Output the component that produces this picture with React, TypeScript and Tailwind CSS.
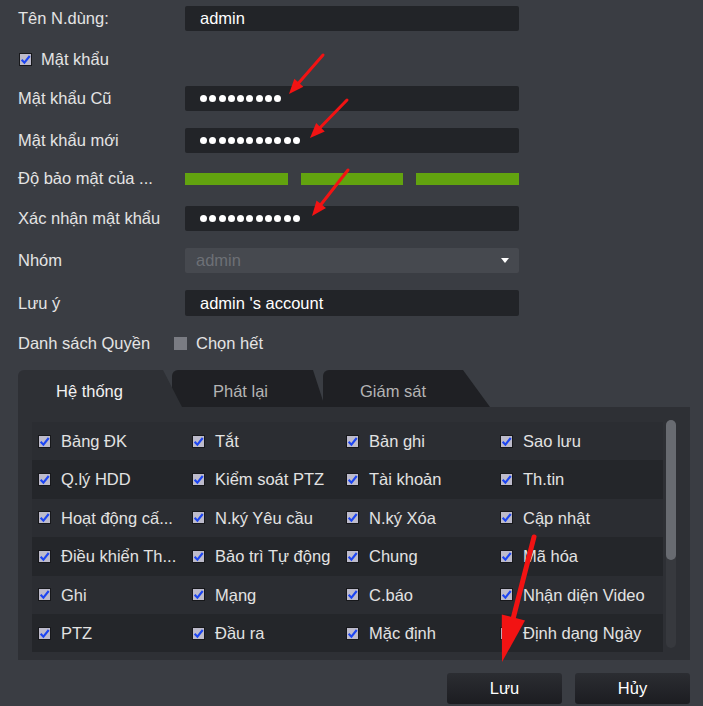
const Check = ({ on = true }: { on?: boolean }) => (
  <span className="w-[13px] h-[13px] shrink-0 bg-[#bdbbcb] border border-[#17181b] flex items-center justify-center">
    {on && (
      <svg viewBox="0 0 12 12" className="w-[11px] h-[11px]">
        <path d="M1.8 6.2 L4.8 9.4 L10.6 2.2" stroke="#1c45f2" strokeWidth="2.3" fill="none" />
      </svg>
    )}
  </span>
);

const Dots = ({ n }: { n: number }) => (
  <div className="flex gap-[2.3px]">
    {Array.from({ length: n }).map((_, i) => (
      <span key={i} className="w-[7px] h-[7px] rounded-full bg-white" />
    ))}
  </div>
);

const Row = ({ label, cls, children }: { label: string; cls: string; children: React.ReactNode }) => (
  <div className={"flex items-center h-[25px] " + cls}>
    <div className="w-[167px] text-[#e4e4e4]">{label}</div>
    {children}
  </div>
);

const Field = ({ children }: { children: React.ReactNode }) => (
  <div className="w-[334px] h-full bg-[#222428] rounded-[2px] pl-[15px] flex items-center text-white">
    {children}
  </div>
);

const perms = [
  ["Bảng ĐK", "Tắt", "Bản ghi", "Sao lưu"],
  ["Q.lý HDD", "Kiểm soát PTZ", "Tài khoản", "Th.tin"],
  ["Hoạt động cấ...", "N.ký Yêu cầu", "N.ký Xóa", "Cập nhật"],
  ["Điều khiển Th...", "Bảo trì Tự động", "Chung", "Mã hóa"],
  ["Ghi", "Mạng", "C.báo", "Nhận diện Video"],
  ["PTZ", "Đầu ra", "Mặc định", "Định dạng Ngày"],
];

function Arrow({ x1, y1, x2, y2, w, hl, hw }: { x1: number; y1: number; x2: number; y2: number; w: number; hl: number; hw: number }) {
  const len = Math.hypot(x2 - x1, y2 - y1);
  const ux = (x2 - x1) / len;
  const uy = (y2 - y1) / len;
  const bx = x2 - ux * hl;
  const by = y2 - uy * hl;
  const px = -uy * (hw / 2);
  const py = ux * (hw / 2);
  return (
    <g fill="#f21313" stroke="#f21313">
      <line x1={x1} y1={y1} x2={bx + ux * 2} y2={by + uy * 2} strokeWidth={w} strokeLinecap="round" />
      <polygon points={`${x2},${y2} ${bx + px},${by + py} ${bx - px},${by - py}`} stroke="none" />
    </g>
  );
}

export default function App() {
  return (
    <div className="relative w-[703px] h-[706px] overflow-hidden bg-[#3a3d43] font-['Liberation_Sans',Arial,sans-serif] text-[16.5px] leading-none">
      <div className="pt-[6px] pl-[18px]">
        <Row label="Tên N.dùng:" cls="">
          <Field>admin</Field>
        </Row>
        <div className="mt-[16px] h-[25px] flex items-center gap-[9px] pl-[1px] text-[#e4e4e4]">
          <Check />
          <span>Mật khẩu</span>
        </div>
        <Row label="Mật khẩu Cũ" cls="mt-[14px]">
          <Field>
            <Dots n={9} />
          </Field>
        </Row>
        <Row label="Mật khẩu mới" cls="mt-[17px]">
          <Field>
            <Dots n={11} />
          </Field>
        </Row>
        <Row label="Độ bảo mật của ..." cls="mt-[13px]">
          <div className="flex gap-[13px]">
            <span className="w-[103px] h-[12px] bg-[#62a30f]" />
            <span className="w-[102px] h-[12px] bg-[#62a30f]" />
            <span className="w-[103px] h-[12px] bg-[#62a30f]" />
          </div>
        </Row>
        <Row label="Xác nhận mật khẩu" cls="mt-[15px]">
          <Field>
            <Dots n={11} />
          </Field>
        </Row>
        <Row label="Nhóm" cls="mt-[17px]">
          <div className="w-[334px] h-full bg-[#46494f] rounded-[2px] pl-[11px] pr-[10px] flex items-center justify-between text-[#6d7076]">
            <span>admin</span>
            <span className="w-0 h-0 border-l-[4px] border-r-[4px] border-t-[5px] border-l-transparent border-r-transparent border-t-white" />
          </div>
        </Row>
        <Row label="Lưu ý" cls="mt-[17px] h-[26px]">
          <Field>admin 's account</Field>
        </Row>
        <div className="mt-[15px] h-[25px] flex items-center text-[#e4e4e4]">
          <span className="w-[156px]">Danh sách Quyền</span>
          <span className="w-[13px] h-[13px] bg-[#7a7c83]" />
          <span className="ml-[9px]">Chọn hết</span>
        </div>

        <div className="mt-[14px] flex h-[37px]">
          <div className="relative z-10 w-[164px] h-full rounded-tl-[6px] bg-[#2e3035] pl-[38px] pt-[6px] flex items-center text-[#f2f2f2] [clip-path:polygon(0_0,145px_0,164px_100%,0_100%)]">
            Hệ thống
          </div>
          <div className="ml-[-10px] w-[153px] h-full rounded-tl-[6px] bg-[#1f2024] pl-[41px] pt-[6px] flex items-center text-[#b4b4b4] [clip-path:polygon(0_0,141px_0,153px_100%,0_100%)]">
            Phát lại
          </div>
          <div className="ml-[-2px] w-[167px] h-full rounded-tl-[6px] bg-[#1f2024] pl-[37px] pt-[6px] flex items-center text-[#b4b4b4] [clip-path:polygon(0_0,140px_0,167px_100%,0_100%)]">
            Giám sát
          </div>
        </div>

        <div className="w-[672px] h-[253px] bg-[#2e3035] pl-[14px] pt-[13px] flex items-start">
          <div className="mt-[2px] w-[631px]">
            {perms.map((row, r) => (
              <div
                key={r}
                className={"h-[38.4px] flex items-center pl-[6px] " + (r % 2 === 0 ? "bg-[#2b2d32]" : "bg-[#24262a]")}
              >
                {row.map((t) => (
                  <div key={t} className="w-[154px] flex items-center gap-[10px] text-[#e2e2e2] whitespace-nowrap">
                    <Check />
                    <span>{t}</span>
                  </div>
                ))}
              </div>
            ))}
          </div>
          <div className="ml-[3px] w-[10px] h-[228px] rounded-full bg-[#37393e] flex flex-col">
            <div className="h-[140px] rounded-full bg-[#686b71]" />
          </div>
        </div>

        <div className="mt-[13px] w-[672px] flex justify-end gap-[13px]">
          <button className="w-[115px] h-[31px] rounded-[3px] bg-gradient-to-b from-[#2b2d32] to-[#1c1d21] text-white">
            Lưu
          </button>
          <button className="w-[115px] h-[31px] rounded-[3px] bg-gradient-to-b from-[#2b2d32] to-[#1c1d21] text-white">
            Hủy
          </button>
        </div>
      </div>

      <svg className="absolute inset-0 pointer-events-none" width="703" height="706">
        <Arrow x1={323} y1={55} x2={289} y2={94} w={3} hl={15} hw={12} />
        <Arrow x1={347} y1={100} x2={310} y2={138} w={3} hl={15} hw={12} />
        <Arrow x1={348} y1={170} x2={312} y2={216} w={3} hl={15} hw={12} />
        <Arrow x1={534} y1={537} x2={502} y2={662} w={5} hl={46} hw={24} />
      </svg>
    </div>
  );
}
